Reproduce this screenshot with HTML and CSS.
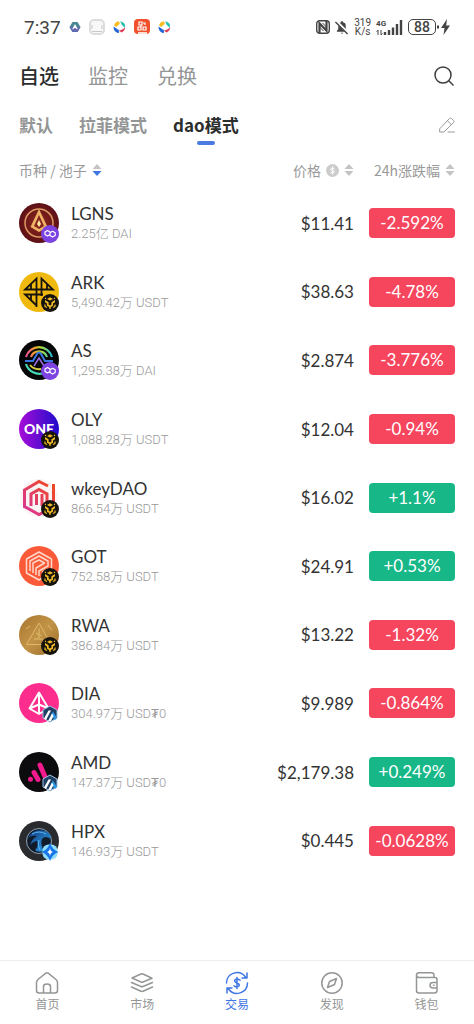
FILE: index.html
```html
<!DOCTYPE html>
<html lang="zh-CN">

<head>
    <meta charset="UTF-8">
    <meta name="viewport" content="width=device-width, initial-scale=1.0">
    <title>自选</title>
    <link rel="stylesheet" href="styles.css">
</head>

<body>
    <!-- Shared symbols: chain badges, sort arrows -->
    <svg class="symbols" aria-hidden="true">
        <defs>
            <linearGradient id="rainbow" x1="0" y1="0" x2="1" y2="0">
                <stop offset="0" stop-color="#f04aa0" />
                <stop offset=".3" stop-color="#f39a2c" />
                <stop offset=".6" stop-color="#a8e03a" />
                <stop offset="1" stop-color="#22b8d8" />
            </linearGradient>
            <linearGradient id="oly" x1="0" y1="0" x2="1" y2="0">
                <stop offset="0" stop-color="#a80cd8" />
                <stop offset="1" stop-color="#1f0ccb" />
            </linearGradient>
            <linearGradient id="wkey" x1="0" y1="1" x2="1" y2="0">
                <stop offset="0" stop-color="#d8359a" />
                <stop offset="1" stop-color="#f04a1c" />
            </linearGradient>
            <radialGradient id="lgns">
                <stop offset="0" stop-color="#8f2a20" />
                <stop offset="1" stop-color="#5c1016" />
            </radialGradient>
            <linearGradient id="gold" x1="0" y1="0" x2="1" y2="1">
                <stop offset="0" stop-color="#a87530" />
                <stop offset=".5" stop-color="#c29447" />
                <stop offset="1" stop-color="#9a6a28" />
            </linearGradient>
            <linearGradient id="hpx" x1="0" y1="0" x2="1" y2="1">
                <stop offset="0" stop-color="#123c80" />
                <stop offset="1" stop-color="#2fa4ee" />
            </linearGradient>
        </defs>
        <symbol id="polygon" viewBox="0 0 18 18">
            <circle cx="9" cy="9" r="9" fill="#7c43e0" />
            <path d="M9 9.500 6.500 11 4 9.500V6.900L6.500 5.400 9 6.900v3.600l2.600 1.600 2.600-1.500V7.800l-2.600-1.500L9 7.800" fill="none" stroke="#fff" stroke-width="1.200" stroke-linejoin="round" />
        </symbol>
        <symbol id="bnb" viewBox="0 0 18 18">
            <circle cx="9" cy="9" r="9" fill="#17140e" />
            <path d="M9 3.200 12 5 9 6.600 6 5zM4 6l3.600 2.200v2.400L9 11.400l1.400-.8V8.200L14 6v2.200l-2 1.200v2.400L9.800 13v1.600L9 15l-.8-.4V13L6 11.800V9.400L4 8.200z" fill="#f0bb25" />
            <path d="M4 10.500V12.400L6 13.600M14 10.500V12.400L12 13.600M4 4.700 5 4.100M14 4.700 13 4.100" fill="none" stroke="#f0bb25" stroke-width="1.200" />
        </symbol>
        <symbol id="arb" viewBox="0 0 18 18">
            <path d="M9 1 16 5v8l-7 4-7-4V5z" fill="#213f63" stroke="#9fc4e4" stroke-width="1" />
            <path d="M10 10 12 6.500 16 13 14 15z" fill="#2a97e4" />
            <path d="M3 13.500 7.500 5.500H10L5 15zM7 16 11 8.500 12.500 11 10 16z" fill="#fff" />
        </symbol>
        <symbol id="star" viewBox="0 0 18 18">
            <rect x="1.500" y="1.500" width="15" height="15" rx="6" fill="#8fdcfa" />
            <path d="M9 0Q11 6.500 17.500 9 11.500 11 9 18 6.500 11 .5 9 7 6.500 9 0z" fill="#1674e6" />
            <path d="M9 5Q9.500 8.500 12 9 9.500 9.500 9 13 8.500 9.500 6 9 8.500 8.500 9 5z" fill="#fff" />
        </symbol>
        <symbol id="swirl" viewBox="0 0 12 12">
            <path d="M1 4.500A5 5 0 0 1 5.500 .6L6.300 3 3 6z" fill="#f8bd20" />
            <path d="M6.600 .6A5.500 5.500 0 0 1 11 3.500V7L8 4z" fill="#27c2ae" />
            <path d="M11.300 6.500A5.500 5.500 0 0 1 8 11L5.500 9.500 8.500 8.300z" fill="#e33a58" />
            <path d="M.6 5.500V7.500A5.500 5.500 0 0 0 5.500 11.500L5.500 9 2.500 7z" fill="#2467d6" />
        </symbol>
        <symbol id="sort" viewBox="0 0 10 14">
            <path d="M5 1 9.500 6H.5z" fill="var(--up)" />
            <path d="M5 13 9.500 8H.5z" fill="var(--down)" />
        </symbol>
    </svg>

    <div class="page">
        <div class="status-bar">
            <span class="time">7:37</span>
            <div class="notices">
                <svg width="12" height="12" viewBox="0 0 12 12"><path d="M3.500 1h5L11.500 6l-3 5h-5L.5 6z" fill="#4a8796" /><path d="M.5 6l3 5h5l3-5z" fill="#6369b0" /><path d="M6 3 9 8.500 6 7 3 8.500z" fill="#fff" /></svg>
                <svg width="16" height="16" viewBox="0 0 16 16"><rect x="1" y="1" width="14" height="14" rx="4" fill="#f8f8f8" stroke="#dcdcdc" stroke-width="2" /><path d="M3 6v4M13 6v4M3 12.500h10" stroke="#c8c8c8" /></svg>
                <svg width="13" height="14"><use href="#swirl" /></svg>
                <svg width="16" height="16" viewBox="0 0 16 16"><rect width="16" height="15" rx="4" fill="#f0512c" /><path d="M5 3h3v3H5zM9 4h2v2M4 8h3v3H4zM9 8h3v3H9zM7 6v3" fill="none" stroke="#fff" stroke-width="1.200" /><path d="M4 14h9" stroke="#fbe0d0" stroke-width="2" /></svg>
                <svg width="13" height="14"><use href="#swirl" /></svg>
            </div>
            <div class="signals">
                <svg width="14" height="14" viewBox="0 0 14 14" fill="none" stroke="#444"><rect x=".7" y=".7" width="12.600" height="12.600" rx="3" stroke-width="1.400" /><path d="M3.500 13V3.500L10.500 10.500V1" stroke-width="2.200" /><path d="M6.500 3 10.500 7M3.500 7 7.500 11" stroke-width="1" /></svg>
                <svg width="14" height="15" viewBox="0 0 15 15"><path d="M2 12V11L3.500 9.500V5.500Q3.500 2.500 6.500 2V1q1-1 2 0v1Q11.500 2.500 11.500 5.500V9.500L13 11v1zM6 13h3q-1.500 2-3 0" fill="#444" /><path d="M1.500 1 14 13.500" stroke="#fff" stroke-width="3" /><path d="M.5 1.500 13.500 14.500" stroke="#444" stroke-width="1.500" /></svg>
                <span class="speed">319<br>K/s</span>
                <div class="network">
                    <span class="network-type">4G</span>
                    <svg width="27" height="15" viewBox="0 0 27 15"><path d="M2 10v5M5 10v5M.5 11.500 2 10M6.500 13.500 5 15" stroke="#444" /><path d="M9 12v3M13 10v5M17 7.500V15M21 4v11M25 0v15" stroke="#444" stroke-width="2.400" /></svg>
                </div>
                <div class="power">
                    <span class="battery">88</span>
                    <svg width="13" height="16" viewBox="0 0 13 16"><path d="M1 6.500v3" stroke="#444" stroke-width="2" /><path d="M10 0 4 9h3.500L6.500 16 13 6.500H9.200z" fill="#444" /></svg>
                </div>
            </div>
        </div>

        <header class="top-nav">
            <a class="top-link active" href="#">自选</a>
            <a class="top-link" href="#">监控</a>
            <a class="top-link" href="#">兑换</a>
            <button class="icon-button" type="button" aria-label="搜索">
                <svg width="22" height="22" viewBox="0 0 22 22" fill="none" stroke="#3c3d3d" stroke-width="1.500"><circle cx="10" cy="10" r="8" /><path d="M15.800 15.800 20.500 20.500" /></svg>
            </button>
        </header>

        <nav class="groups">
            <a class="group" href="#">默认</a>
            <a class="group" href="#">拉菲模式</a>
            <a class="group active" href="#">dao模式</a>
            <button class="icon-button" type="button" aria-label="编辑">
                <svg width="16" height="18" viewBox="0 0 16 18" fill="none" stroke="#999" stroke-linejoin="round" stroke-linecap="round"><path d="M1 12.500 10.500 2.500Q11.500 1.500 12.500 2.500L14.500 4.500Q15.500 5.500 14.500 6.500L5 16H1zM8.500 4.800 12.300 8.500M9 16h6.500" /></svg>
            </button>
        </nav>

        <table class="coins">
            <thead>
                <tr>
                    <th class="col-coin"><button class="sort desc" type="button">币种 / 池子 <svg width="10" height="14"><use href="#sort" /></svg></button></th>
                    <th class="col-price"><button class="sort" type="button">价格 <svg class="currency" width="13" height="13" viewBox="0 0 13 13"><circle cx="6.500" cy="6.500" r="6.500" fill="#ccc" /><path d="M8.500 4.800Q6.500 3.200 5 4.600T6.500 6.500 8 8.500 4.500 8.300M6.500 2.500v8" fill="none" stroke="#fff" /></svg><svg width="10" height="14"><use href="#sort" /></svg></button></th>
                    <th class="col-change"><button class="sort" type="button">24h涨跌幅 <svg width="10" height="14"><use href="#sort" /></svg></button></th>
                </tr>
            </thead>
            <tbody>
                <tr>
                    <td>
                        <div class="coin">
                            <svg class="logo" viewBox="0 0 40 40">
                                <circle cx="20" cy="20" r="20" fill="url(#lgns)" />
                                <circle cx="20" cy="20" r="14" fill="none" stroke="#dd9a62" stroke-width="1.500" />
                                <path d="M20 6 28.500 24 20 29 11.500 24zM20 12 15 23l5 3 5-3z" fill="#efb266" fill-rule="evenodd" />
                                <path d="M20 17 22 21 20 24 18 21z" fill="#ffe6a2" />
                                <use href="#polygon" x="22" y="22" width="18" height="18" />
                            </svg>
                            <div><div class="name">LGNS</div><div class="pool">2.25亿 DAI</div></div>
                        </div>
                    </td>
                    <td class="price">$11.41</td>
                    <td class="change"><span class="chip down">-2.592%</span></td>
                </tr>
                <tr>
                    <td>
                        <div class="coin">
                            <svg class="logo" viewBox="0 0 40 40">
                                <circle cx="20" cy="20" r="20" fill="#f0b90f" />
                                <path d="M17.500 35V6.500L6 17.500H34L22.500 6.500V24M12 12V17.500M28 12V17.500M17.500 22.500H6L17.500 33.500M12 22.500V28M17.500 22.500H24" fill="none" stroke="#17140e" stroke-width="1.800" />
                                <use href="#bnb" x="22" y="22" width="18" height="18" />
                            </svg>
                            <div><div class="name">ARK</div><div class="pool">5,490.42万 USDT</div></div>
                        </div>
                    </td>
                    <td class="price">$38.63</td>
                    <td class="change"><span class="chip down">-4.78%</span></td>
                </tr>
                <tr>
                    <td>
                        <div class="coin">
                            <svg class="logo" viewBox="0 0 40 40">
                                <circle cx="20" cy="20" r="20" fill="#050507" />
                                <path d="M7 17A13.500 13.500 0 0 1 33 17M12 17A8.500 8.500 0 0 1 28 17" fill="none" stroke="url(#rainbow)" stroke-width="2.200" />
                                <path d="M6 21h8L18 14q2-3 4 0l4 7h8" fill="none" stroke="#3a76e4" stroke-width="2" />
                                <path d="M15 26l5-8 5 8" fill="none" stroke="#9a6ce0" stroke-width="1.500" />
                                <path d="M7 24A14 14 0 0 0 25 33" fill="none" stroke="#45d7b4" stroke-width="2.200" />
                                <path d="M11 25Q15 30 22 29" fill="none" stroke="#d8cf3e" stroke-width="2" />
                                <use href="#polygon" x="22" y="22" width="18" height="18" />
                            </svg>
                            <div><div class="name">AS</div><div class="pool">1,295.38万 DAI</div></div>
                        </div>
                    </td>
                    <td class="price">$2.874</td>
                    <td class="change"><span class="chip down">-3.776%</span></td>
                </tr>
                <tr>
                    <td>
                        <div class="coin">
                            <svg class="logo" viewBox="0 0 40 40">
                                <circle cx="20" cy="20" r="20" fill="url(#oly)" />
                                <text class="logo-text" x="20" y="25" text-anchor="middle">ONE</text>
                                <use href="#bnb" x="22" y="22" width="18" height="18" />
                            </svg>
                            <div><div class="name">OLY</div><div class="pool">1,088.28万 USDT</div></div>
                        </div>
                    </td>
                    <td class="price">$12.04</td>
                    <td class="change"><span class="chip down">-0.94%</span></td>
                </tr>
                <tr>
                    <td>
                        <div class="coin">
                            <svg class="logo" viewBox="0 0 40 40">
                                <circle cx="20" cy="20" r="19" fill="#faf4f5" />
                                <path d="M29 8 20 3.500 5.500 12V28.500L20 36.500 25 34M12 28V16L20 11.500 28 16V28M17.500 27V16M23 28V16M34.500 6V26" fill="none" stroke="url(#wkey)" stroke-width="3" />
                                <use href="#bnb" x="22" y="22" width="18" height="18" />
                            </svg>
                            <div><div class="name">wkeyDAO</div><div class="pool">866.54万 USDT</div></div>
                        </div>
                    </td>
                    <td class="price">$16.02</td>
                    <td class="change"><span class="chip up">+1.1%</span></td>
                </tr>
                <tr>
                    <td>
                        <div class="coin">
                            <svg class="logo" viewBox="0 0 40 40">
                                <circle cx="20" cy="20" r="20" fill="#fa5a38" />
                                <path d="M20 6 32.500 13V27L20 34 7.500 27V13zM11 25V15L20 10 29 15V20L20 25V30M14 27V17L20 14 25.500 17 17 22V29M29 23 23 26" fill="none" stroke="#ffd8ca" stroke-width="1.500" stroke-linejoin="round" />
                                <use href="#bnb" x="22" y="22" width="18" height="18" />
                            </svg>
                            <div><div class="name">GOT</div><div class="pool">752.58万 USDT</div></div>
                        </div>
                    </td>
                    <td class="price">$24.91</td>
                    <td class="change"><span class="chip up">+0.53%</span></td>
                </tr>
                <tr>
                    <td>
                        <div class="coin">
                            <svg class="logo" viewBox="0 0 40 40">
                                <circle cx="20" cy="20" r="20" fill="url(#gold)" />
                                <path d="M20 8 7.500 29.500H32zM20 13V23M15 24h9M17 18l6 3M7 14l4-3M29 10l4 5" fill="none" stroke="#dfb968" stroke-width="1" />
                                <use href="#bnb" x="22" y="22" width="18" height="18" />
                            </svg>
                            <div><div class="name">RWA</div><div class="pool">386.84万 USDT</div></div>
                        </div>
                    </td>
                    <td class="price">$13.22</td>
                    <td class="change"><span class="chip down">-1.32%</span></td>
                </tr>
                <tr>
                    <td>
                        <div class="coin">
                            <svg class="logo" viewBox="0 0 40 40">
                                <circle cx="20" cy="20" r="20" fill="#fc2d8d" />
                                <path d="M20 9.500 10.500 25.500 20 31 29.500 25.500zM20 9.500V31M10.500 25.500 20 21.500 29.500 25.500" fill="none" stroke="#fff" stroke-width="2" stroke-linejoin="round" />
                                <use href="#arb" x="22" y="22" width="18" height="18" />
                            </svg>
                            <div><div class="name">DIA</div><div class="pool">304.97万 USD₮0</div></div>
                        </div>
                    </td>
                    <td class="price">$9.989</td>
                    <td class="change"><span class="chip down">-0.864%</span></td>
                </tr>
                <tr>
                    <td>
                        <div class="coin">
                            <svg class="logo" viewBox="0 0 40 40">
                                <circle cx="20" cy="20" r="20" fill="#0c0c0e" />
                                <path d="M11.500 27.200V27.300M15 20.500 19 27.500M21 13 27 27" fill="none" stroke="#f21a8c" stroke-width="5" stroke-linecap="round" />
                                <use href="#arb" x="22" y="22" width="18" height="18" />
                            </svg>
                            <div><div class="name">AMD</div><div class="pool">147.37万 USD₮0</div></div>
                        </div>
                    </td>
                    <td class="price">$2,179.38</td>
                    <td class="change"><span class="chip up">+0.249%</span></td>
                </tr>
                <tr>
                    <td>
                        <div class="coin">
                            <svg class="logo" viewBox="0 0 40 40">
                                <circle cx="20" cy="20" r="20" fill="#2a2b2e" />
                                <circle cx="20" cy="20" r="12.500" fill="#111b2a" stroke="#8fa3b4" />
                                <path d="M9 17Q14 7 26 10 32 12 32 18 26 14 23 18 21 23 25 30 19 32 16 29 20 26 18 20 15 20 11 24 13 18 18 15 13 14 9 17z" fill="url(#hpx)" />
                                <path d="M13 13Q20 9 27 13M20 19Q18 24 21 29" fill="none" stroke="#5cb8f4" />
                                <use href="#star" x="22" y="22" width="18" height="18" />
                            </svg>
                            <div><div class="name">HPX</div><div class="pool">146.93万 USDT</div></div>
                        </div>
                    </td>
                    <td class="price">$0.445</td>
                    <td class="change"><span class="chip down">-0.0628%</span></td>
                </tr>
            </tbody>
        </table>

        <nav class="tab-bar">
            <a class="tab" href="#">
                <svg viewBox="0 0 24 24"><path d="M10.800 2.200Q12 1.200 13.200 2.200L21 8.500Q22.500 9.800 22.500 11.500V19.500Q22.500 22 20 22H4Q1.500 22 1.500 19.500V11.500Q1.500 9.800 3 8.500zM8.500 22V15.500Q8.500 13 12 13T15.500 15.500V22" /></svg>
                首页
            </a>
            <a class="tab" href="#">
                <svg viewBox="0 0 24 24"><path d="M2 7 11 3Q12 2.600 13 3L22 7.200 13 11Q12 11.400 11 11zM1.500 11.500 11 15.500Q12 16 13 15.500L22.500 11.500M1.500 16 11 20.200Q12 20.700 13 20.200L22.500 16" /></svg>
                市场
            </a>
            <a class="tab active" href="#">
                <svg viewBox="0 0 24 24"><path d="M1.500 12A10.500 10.500 0 0 1 20.500 6M22 2V7H17M22.500 12A10.500 10.500 0 0 1 3.500 18M2 22V17H7M15 9.200Q12 7 10 8.800 9 11 12 12T14 15Q12 16.800 9 14.800M12 6.500V17.500" /></svg>
                交易
            </a>
            <a class="tab" href="#">
                <svg viewBox="0 0 24 24"><circle cx="12" cy="12" r="10.200" /><path d="M16.500 7.500 14.500 13.500 7.500 16.500 9.500 10.500z" /></svg>
                发现
            </a>
            <a class="tab" href="#">
                <svg viewBox="0 0 24 24"><path d="M19 6V4Q19 1.700 16.500 1.700H4Q1.500 1.700 1.500 4V19.500Q1.500 22 4 22H19.500Q22 22 22 19.500V8.500Q22 6.500 20 6.500H4Q1.500 6.500 1.500 4M22 11.500H18Q15 11.500 15 14.200T18 17H22M18.500 14.200H19" /></svg>
                钱包
            </a>
        </nav>
    </div>
</body>

</html>
```
FILE: styles.css
```css
* {
    box-sizing: border-box;
}

body {
    margin: 0;
    background-color: #fff;
    color: #333;
    font-family: Lato, "Noto Sans CJK SC", "DejaVu Sans", sans-serif;
}

a {
    color: inherit;
    text-decoration: none;
}

button {
    padding: 0;
    border: none;
    background: none;
    color: inherit;
    font: inherit;
    cursor: pointer;
}

svg {
    display: block;
    flex-shrink: 0;
}

.symbols {
    position: absolute;
    width: 0;
    height: 0;
}

.page {
    display: flex;
    flex-direction: column;
    min-height: 100vh;
}

/* status bar */
.status-bar {
    display: flex;
    align-items: center;
    gap: 8px;
    height: 54px;
    padding: 0 24px;
    color: #444;
    font-family: Roboto, sans-serif;
}

.time {
    font-size: 19px;
}

.notices {
    display: flex;
    align-items: center;
    gap: 8px;
}

.signals {
    display: flex;
    align-items: center;
    gap: 5px;
    margin-left: auto;
}

.speed {
    font-size: 10px;
    line-height: 9px;
    text-align: center;
}

.network {
    display: grid;
}

.network > * {
    grid-area: 1 / 1;
}

.network-type {
    font-size: 8px;
    line-height: 8px;
    font-weight: 700;
}

.power {
    display: flex;
    align-items: center;
    gap: 1px;
}

.battery {
    padding: 0 5px;
    border: 1px solid #444;
    border-radius: 5px;
    font-size: 14px;
    font-weight: 500;
    line-height: 14px;
}

/* page navigation */
.top-nav {
    display: flex;
    align-items: center;
    gap: 29px;
    height: 44px;
    padding: 0 19px;
    color: #949696;
    font-size: 20px;
    line-height: 24px;
}

.top-link.active {
    color: #2c2d2d;
    font-weight: 500;
}

.icon-button {
    margin-left: auto;
}

.groups {
    display: flex;
    align-items: center;
    gap: 26px;
    height: 53px;
    padding: 0 19px;
    color: #949696;
    font-family: "Noto Sans CJK SC", sans-serif;
    font-size: 17px;
    font-weight: 700;
    line-height: 24px;
}

.group.active {
    position: relative;
    color: #2c2d2d;
}

.group.active::after {
    content: "";
    position: absolute;
    left: 50%;
    bottom: -8px;
    width: 18px;
    height: 4px;
    margin-left: -9px;
    border-radius: 2px;
    background-color: #4a7ae2;
}

/* coin list */
.coins {
    width: 100%;
    height: 724px;
    border-collapse: collapse;
}

th,
td {
    padding: 0;
}

th {
    height: 38px;
    color: #999;
    font-family: "Noto Sans CJK SC", sans-serif;
    font-size: 14px;
    font-weight: 400;
    text-align: right;
}

.col-coin {
    padding-left: 19px;
    text-align: left;
}

.col-change,
.change {
    width: 120px;
    padding-right: 19px;
}

.sort {
    --up: #c4c4c4;
    --down: #c4c4c4;
    display: inline-flex;
    align-items: center;
    gap: 5px;
    line-height: 20px;
    white-space: nowrap;
}

.sort.desc {
    --down: #3f76e6;
}

.coin {
    display: flex;
    align-items: center;
    gap: 12px;
    padding-left: 19px;
}

.logo {
    width: 40px;
    height: 40px;
}

.logo-text {
    fill: #fff;
    font-size: 14px;
    font-weight: 900;
}

.name {
    font-size: 17px;
    line-height: 22px;
}

.pool {
    color: #999;
    font-family: Roboto, "Noto Sans CJK SC", "DejaVu Sans", sans-serif;
    font-size: 13px;
    font-weight: 300;
    line-height: 18px;
}

.price {
    font-size: 17px;
    text-align: right;
}

.chip {
    display: block;
    width: 86px;
    margin-left: auto;
    border-radius: 4px;
    color: #fff;
    font-size: 17px;
    line-height: 30px;
    text-align: center;
}

.chip.down {
    background-color: #f6465d;
}

.chip.up {
    background-color: #17b787;
}

/* bottom tabs */
.tab-bar {
    display: flex;
    margin-top: auto;
    border-top: 1px solid #eee;
}

.tab {
    display: flex;
    flex: 1;
    flex-direction: column;
    align-items: center;
    gap: 1px;
    padding: 10px 0;
    color: #949696;
    font-size: 12px;
    line-height: 18px;
}

.tab svg {
    width: 24px;
    height: 24px;
    fill: none;
    stroke: currentColor;
    stroke-width: 1.5;
    stroke-linecap: round;
    stroke-linejoin: round;
}

.tab.active {
    color: #3f76e6;
}
```
